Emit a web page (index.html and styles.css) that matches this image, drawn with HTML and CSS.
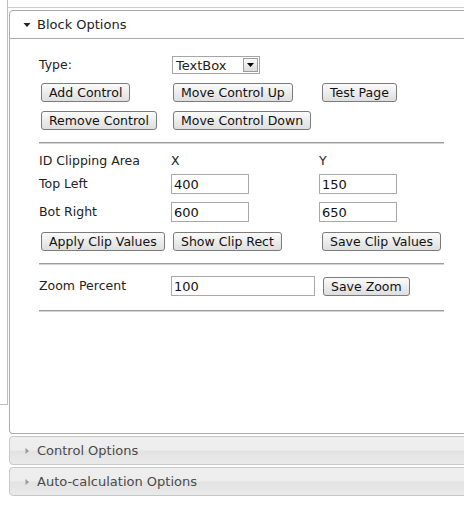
FILE: index.html
```html
<!DOCTYPE html>
<html>
<head>
<meta charset="utf-8">
<link rel="stylesheet" href="styles.css">
</head>
<body>
<div class="page">
  <div class="side"></div>
  <div class="main">
    <div class="accordion">
      <div class="acc-header active">
        <svg class="tri" width="8" height="8" viewBox="0 0 8 8"><path d="M0.5 2 L7.5 2 L4 6 Z" fill="#222"/></svg>
        <span>Block Options</span>
      </div>
      <div class="acc-content">
        <div class="form">
          <div class="grid grid1">
            <div class="label">Type:</div>
            <div class="cell">
              <div class="select">
                <span class="sel-text">TextBox</span>
                <span class="sel-btn"><svg width="7" height="4" viewBox="0 0 7 4"><path d="M0 0 L7 0 L3.5 4 Z" fill="#000"/></svg></span>
              </div>
            </div>
            <div class="cell"></div>

            <div class="cell"><button class="btn">Add Control</button></div>
            <div class="cell"><button class="btn">Move Control Up</button></div>
            <div class="cell"><button class="btn">Test Page</button></div>

            <div class="cell"><button class="btn">Remove Control</button></div>
            <div class="cell"><button class="btn">Move Control Down</button></div>
            <div class="cell"></div>
          </div>
          <hr class="rule r1">
          <div class="grid grid2">
            <div class="label">ID Clipping Area</div>
            <div class="label">X</div>
            <div class="label">Y</div>

            <div class="label">Top Left</div>
            <div class="cell"><input class="inp" value="400"></div>
            <div class="cell"><input class="inp" value="150"></div>

            <div class="label">Bot Right</div>
            <div class="cell"><input class="inp" value="600"></div>
            <div class="cell"><input class="inp" value="650"></div>

            <div class="cell"><button class="btn">Apply Clip Values</button></div>
            <div class="cell"><button class="btn">Show Clip Rect</button></div>
            <div class="cell"><button class="btn">Save Clip Values</button></div>
          </div>
          <hr class="rule r2">
          <div class="zoomrow">
            <div class="label zlabel">Zoom Percent</div>
            <input class="inp wide" value="100">
            <button class="btn">Save Zoom</button>
          </div>
          <hr class="rule r3">
        </div>
      </div>
      <div class="acc-header collapsed">
        <svg class="tri" width="8" height="8" viewBox="0 0 8 8"><path d="M2.5 1 L6 4 L2.5 7 Z" fill="#999"/></svg>
        <span>Control Options</span>
      </div>
      <div class="acc-header collapsed">
        <svg class="tri" width="8" height="8" viewBox="0 0 8 8"><path d="M2.5 1 L6 4 L2.5 7 Z" fill="#999"/></svg>
        <span>Auto-calculation Options</span>
      </div>
    </div>
  </div>
</div>
</body>
</html>
```

FILE: styles.css
```css
html, body {
  margin: 0;
  padding: 0;
  background: #fff;
  overflow: hidden;
}
body {
  font-family: "DejaVu Sans", Verdana, sans-serif;
  font-size: 12.5px;
  color: #222;
}
.page {
  display: flex;
  align-items: flex-start;
}
.side {
  width: 7px;
  height: 404px;
  border-right: 1px solid #bdbdbd;
  border-bottom: 1px solid #bdbdbd;
  flex: none;
}
.main {
  flex: none;
  width: 520px;
  margin-top: 7px;
  border-top: 1px solid #cfcfcf;
  padding-left: 1px;
}
.accordion {
  margin-top: 2px;
  width: 500px;
}
.acc-header {
  display: flex;
  align-items: center;
  border: 1px solid #aaa;
  border-radius: 4px;
  padding-left: 13px;
  box-sizing: border-box;
  font-size: 13px;
}
.acc-header .tri {
  margin-right: 6px;
}
.acc-header.active {
  height: 29px;
  background: #fff;
  border-bottom-left-radius: 0;
  border-bottom-right-radius: 0;
  color: #222;
}
.acc-header.collapsed {
  height: 29px;
  margin-top: 2px;
  border-color: #c8c8c8;
  background: linear-gradient(#eeeeee 0%, #ededed 48%, #e3e3e3 52%, #e9e9e9 100%);
  color: #4a4a4a;
}
.acc-content {
  height: 395px;
  border: 1px solid #aaa;
  border-top: none;
  border-radius: 0 0 4px 4px;
  box-sizing: border-box;
  padding: 12px 0 0 29px;
}
.form {
  width: 405px;
}
.grid {
  display: grid;
  grid-template-columns: 132px 148px 1fr;
  align-items: center;
}
.grid1 {
  grid-template-rows: 28px 27px 28px;
}
.grid2 {
  grid-template-rows: 18px 28px 28px 30px;
}
.label {
  line-height: 16px;
}
.cell {
  display: flex;
  align-items: center;
}
.select {
  display: flex;
  align-items: center;
  justify-content: space-between;
  width: 88px;
  height: 18px;
  border: 1px solid #a5a5a5;
  box-sizing: border-box;
  margin-left: 1px;
}
.sel-text {
  padding-left: 3px;
  font-size: 13px;
}
.sel-btn {
  width: 15px;
  height: 14px;
  margin-right: 1px;
  border: 1px solid #9c9c9c;
  box-sizing: border-box;
  background: linear-gradient(#fafafa, #dcdcdc);
  display: flex;
  align-items: center;
  justify-content: center;
}
.btn {
  font-family: "DejaVu Sans", Verdana, sans-serif;
  font-size: 12.5px;
  color: #111;
  height: 19px;
  padding: 0 7px;
  margin: 0 0 0 2px;
  border: 1px solid #7b7b7b;
  border-radius: 3px;
  background: linear-gradient(#fbfbfb 0%, #ececec 50%, #dedede 100%);
  line-height: 15px;
}
.grid .cell:nth-child(3n) .btn {
  margin-left: 3px;
}
.inp {
  font-family: "DejaVu Sans", Verdana, sans-serif;
  font-size: 13px;
  color: #111;
  width: 78px;
  height: 20px;
  border: 1px solid #a9a9a9;
  box-sizing: border-box;
  padding: 0 2px;
  margin: 0;
  outline: none;
}
.inp.wide {
  width: 144px;
}
.rule {
  border: none;
  border-top: 1px solid #9c9c9c;
  border-bottom: 1px solid #d4d4d4;
  height: 0;
  margin: 0;
}
.r1 {
  margin: 8px 0 8px;
}
.r2 {
  margin: 7px 0 9px;
}
.r3 {
  margin: 12px 0 0;
}
.zoomrow {
  display: flex;
  align-items: center;
  height: 24px;
}
.zlabel {
  width: 132px;
}
.zoomrow .btn {
  margin-left: 8px;
}
```
